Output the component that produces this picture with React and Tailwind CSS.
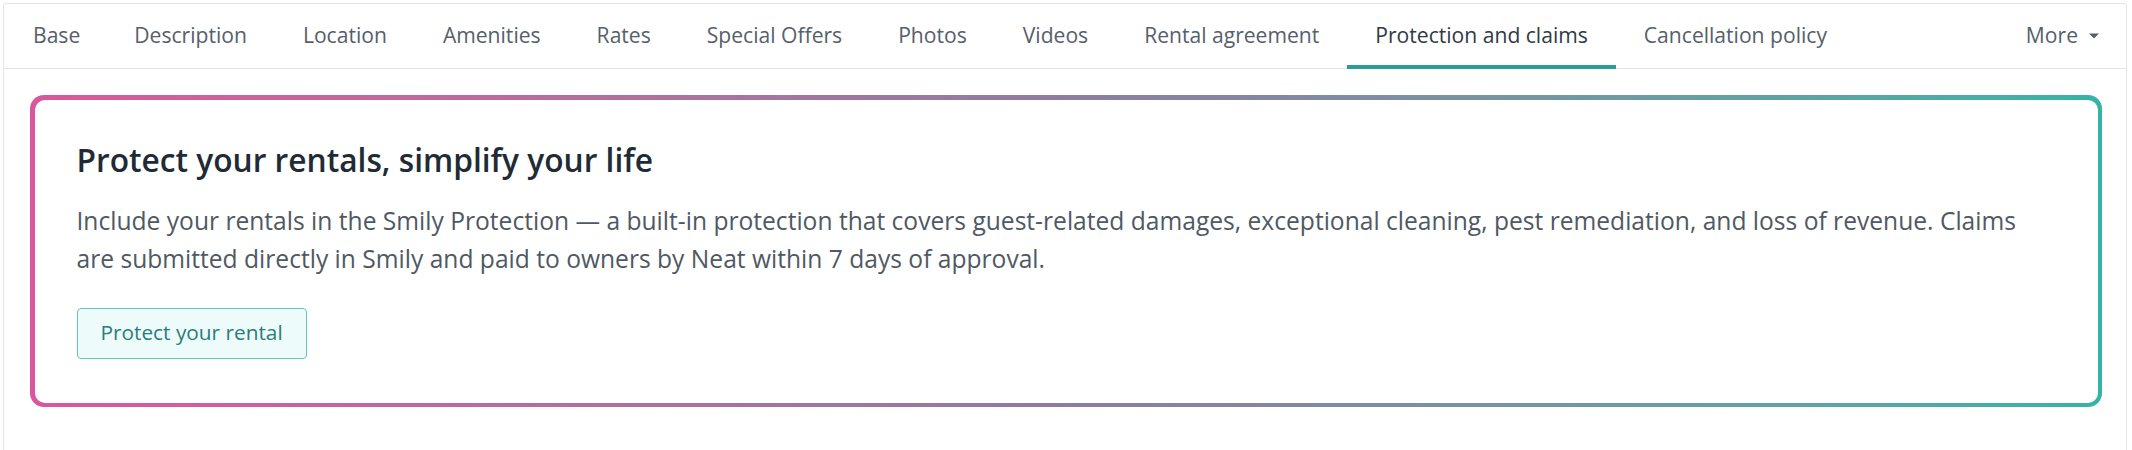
import React from "react";

const tabs = [
  "Base",
  "Description",
  "Location",
  "Amenities",
  "Rates",
  "Special Offers",
  "Photos",
  "Videos",
  "Rental agreement",
  "Protection and claims",
  "Cancellation policy",
];

export default function App() {
  return (
    <div
      className="bg-white w-[2132px] h-[450px] overflow-hidden pt-[3px] pl-[3px] pr-[5px]"
      style={{ fontFamily: '"Open Sans", "Noto Sans", sans-serif' }}
    >
      <div className="border border-[#e3e5e8] rounded-t-[3px] h-[460px]">
        <div className="flex items-stretch h-[65px] border-b border-[#e3e5e8] pl-[1px]">
          {tabs.map((t, i) => {
            const active = t === "Protection and claims";
            return (
              <div
                key={t}
                className={
                  "relative flex items-center pb-[2px] text-[21.1px] " +
                  (i === 0 ? "pl-[28px] pr-[26px] " : "px-[28px] ") +
                  (active ? "text-[#2f3a44]" : "text-[#56606b]")
                }
              >
                {t}
                {active && (
                  <div className="absolute left-0 right-0 bottom-[-1px] h-[4px] bg-[#2a9d99]" />
                )}
              </div>
            );
          })}
          <div className="ml-auto flex items-center pb-[2px] pr-[26px] text-[21.1px] text-[#56606b]">
            More
            <svg width="12" height="8" viewBox="0 0 12 8" className="ml-[10px] mt-[2px]">
              <path d="M1 1.5 L11 1.5 L6 6.5 Z" fill="#56606b" />
            </svg>
          </div>
        </div>

        <div className="ml-[26px] mr-[24px] mt-[26px] rounded-[14px] p-[4.5px] bg-gradient-to-r from-[#d9579c] via-[#8d7c9f] to-[#34b3a6]">
          <div className="bg-white rounded-[10px] pl-[42px] pr-[40px] pt-[42px] pb-[44px]">
            <h2 className="text-[31.7px] leading-[36px] font-semibold text-[#212b36]">
              Protect your rentals, simplify your life
            </h2>
            <p className="mt-[24px] text-[24.6px] leading-[38px] text-[#4f5963]">
              Include your rentals in the Smily Protection — a built-in protection that covers guest-related damages, exceptional cleaning, pest remediation, and loss of revenue. Claims are submitted directly in Smily and paid to owners by Neat within 7 days of approval.
            </p>
            <button className="mt-[30px] h-[51px] px-[23px] rounded-[4px] border-[1.5px] border-[#62c6c2] bg-[#edfbfb] text-[20.8px] text-[#2b7d79]">
              Protect your rental
            </button>
          </div>
        </div>
      </div>
    </div>
  );
}
